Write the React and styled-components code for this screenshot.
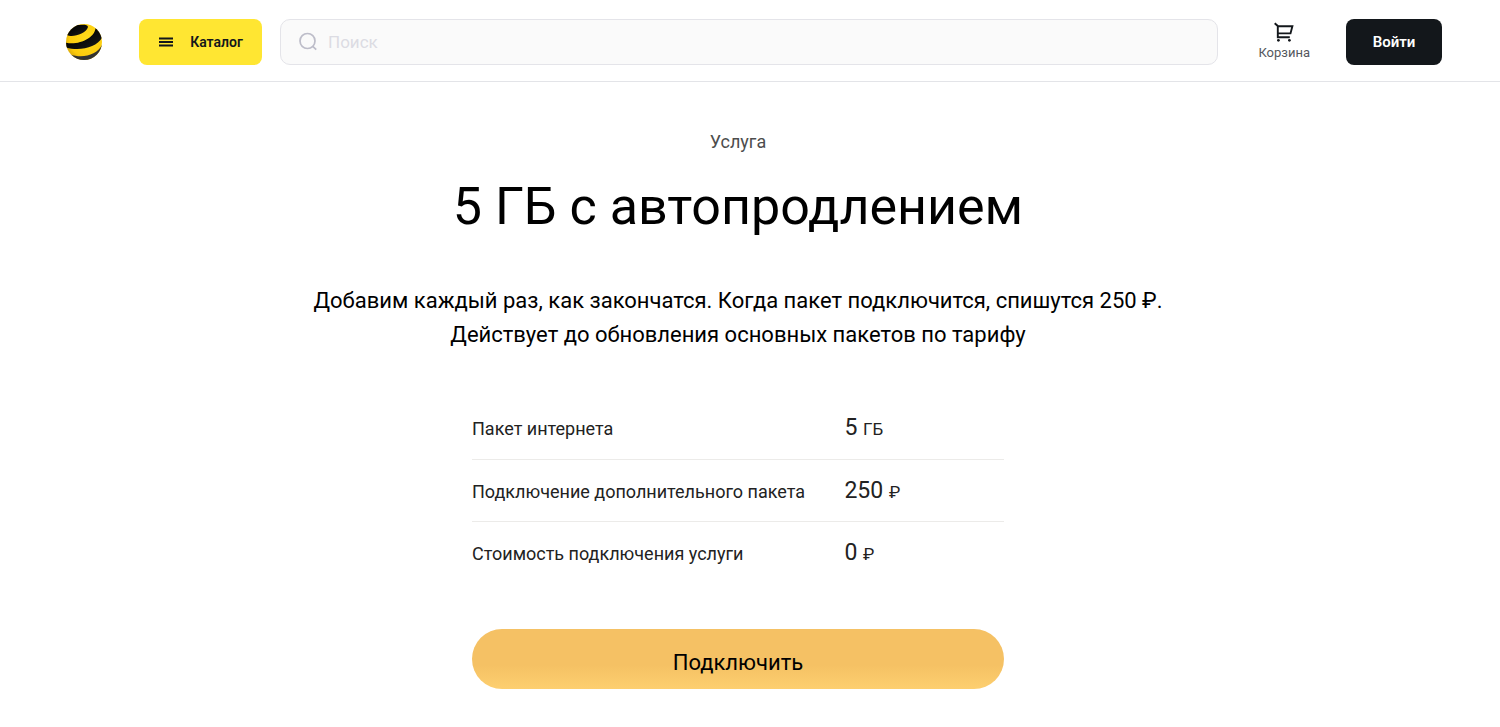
import styled, { createGlobalStyle } from "styled-components";

const GlobalStyle = createGlobalStyle`
  * {
    box-sizing: border-box;
  }

  body {
    margin: 0;
    background: #fff;
    color: #000;
    font-family: Roboto, "Liberation Sans", sans-serif;
  }

  button, input {
    font-family: inherit;
  }
`;

const Header = styled.header`
  display: flex;
  align-items: center;
  height: 82px;
  padding: 2px 58px 0 65px;
  border-bottom: 1px solid #e3e4e8;
`;

const LogoLink = styled.a`
  display: flex;
  margin-right: 36px;
`;

const HeaderButton = styled.button`
  display: flex;
  align-items: center;
  justify-content: center;
  gap: 16px;
  flex: none;
  width: ${props => props.$width};
  height: 46px;
  padding: 0;
  border: 0;
  border-radius: 8px;
  background: ${props => (props.$dark ? "#13171b" : "#ffe632")};
  color: ${props => (props.$dark ? "#fff" : "#13171b")};
  font-size: ${props => (props.$dark ? "15px" : "14px")};
  font-weight: 600;
  cursor: pointer;
`;

const Search = styled.label`
  display: flex;
  align-items: center;
  flex: 1;
  gap: 10px;
  height: 46px;
  margin: 0 40px 0 18px;
  padding: 0 18px;
  border: 1px solid #e4e4e9;
  border-radius: 10px;
  background: #fafafa;
`;

const SearchInput = styled.input`
  flex: 1;
  min-width: 0;
  padding: 0;
  border: 0;
  outline: 0;
  background: transparent;
  font-size: 17px;

  &::placeholder {
    color: #dcdce3;
    opacity: 1;
  }
`;

const CartLink = styled.a`
  display: flex;
  flex-direction: column;
  align-items: center;
  gap: 3px;
  margin-right: 36px;
  color: #55585e;
  font-size: 13px;
  line-height: 16px;
  text-decoration: none;
`;

const Main = styled.main`
  display: flex;
  flex-direction: column;
  align-items: center;
  padding: 48px 36px 38px 12px;
  text-align: center;
`;

const Kind = styled.p`
  margin: 0;
  color: #4d4d4d;
  font-size: 18px;
  line-height: 24px;
`;

const Title = styled.h1`
  margin: 21px 0 0;
  font-size: 52px;
  font-weight: 400;
  line-height: 64px;
`;

const Description = styled.p`
  max-width: 860px;
  margin: 45px 0 0;
  font-size: 22px;
  line-height: 34px;
`;

const Params = styled.table`
  width: 100%;
  max-width: 532px;
  margin-top: 45px;
  border-collapse: collapse;
  table-layout: fixed;
  color: #222;
  text-align: left;
`;

const ParamRow = styled.tr`
  height: 62px;

  & + & {
    border-top: 1px solid #ecebe9;
  }
`;

const ParamName = styled.th`
  width: 70%;
  padding: 2px 0 0;
  font-size: 18px;
  font-weight: 400;
`;

const ParamValue = styled.td`
  padding: 0;
  font-size: 23px;
`;

const Unit = styled.span`
  font-size: 17px;
`;

const ConnectButton = styled.button`
  width: 100%;
  max-width: 532px;
  height: 60px;
  margin-top: 46px;
  padding: 6px 0 0;
  border: 0;
  border-radius: 30px;
  background: linear-gradient(#f5c164 60%, #fdcf70);
  color: #000;
  font-size: 22px;
  cursor: pointer;
`;

const params = [
  { name: "Пакет интернета", value: "5", unit: "ГБ" },
  { name: "Подключение дополнительного пакета", value: "250", unit: "₽" },
  { name: "Стоимость подключения услуги", value: "0", unit: "₽" },
];

const Logo = () => (
  <svg width="38" height="38" viewBox="0 0 38 38" aria-hidden="true">
    <defs>
      <clipPath id="ball">
        <circle cx="19" cy="19" r="18" />
      </clipPath>
      <radialGradient id="yellow" cx="0.6" cy="0.4" r="0.7">
        <stop offset="0" stopColor="#ffdc1c" />
        <stop offset="0.7" stopColor="#fccb0c" />
        <stop offset="1" stopColor="#c99a08" />
      </radialGradient>
      <linearGradient id="black" x1="0" y1="0" x2="1" y2="1">
        <stop offset="0" stopColor="#303030" />
        <stop offset="0.4" stopColor="#050505" />
        <stop offset="1" stopColor="#1c1c1c" />
      </linearGradient>
    </defs>
    <g clipPath="url(#ball)">
      <rect width="38" height="38" fill="url(#yellow)" />
      <path d="M2 12C7 15 21 11 23 4C23 1.5 18 1.5 14 2L8 0L0 8Z" fill="url(#black)" />
      <path d="M0 19.5C13 23 30 15 30.5 5L38 10V13C34 23 17 29 1 24.5Z" fill="url(#black)" />
      <path d="M5 31.5C18 36 33 32 37.5 21V38H5Z" fill="#333" />
    </g>
  </svg>
);

const MenuIcon = () => (
  <svg width="16" height="16" viewBox="0 0 16 16" fill="none" stroke="currentColor" strokeWidth="1.9" aria-hidden="true">
    <path d="M1 4.5H15M1 8H15M1 11.5H15" />
  </svg>
);

const SearchIcon = () => (
  <svg width="19" height="19" viewBox="0 0 19 19" fill="none" stroke="#bdbdc9" strokeWidth="1.7" aria-hidden="true">
    <circle cx="8.5" cy="9" r="7.5" />
    <path d="M13.8 14.3L17.2 17.7" />
  </svg>
);

const CartIcon = () => (
  <svg width="20" height="20" viewBox="0 0 20 20" fill="none" stroke="#13171b" strokeWidth="1.9" aria-hidden="true">
    <path d="M0.7 1.2L3.8 4V15.2H15.8M3.8 4.2H18.4L16.5 11.4H3.8" />
    <circle cx="4.4" cy="18.3" r="1.4" fill="#13171b" stroke="none" />
    <circle cx="15.4" cy="18.3" r="1.4" fill="#13171b" stroke="none" />
  </svg>
);

const App = () => {
  return (
    <>
      <GlobalStyle />
      <Header>
        <LogoLink href="#" aria-label="На главную">
          <Logo />
        </LogoLink>
        <HeaderButton type="button" $width="123px">
          <MenuIcon />
          Каталог
        </HeaderButton>
        <Search>
          <SearchIcon />
          <SearchInput type="search" placeholder="Поиск" aria-label="Поиск" />
        </Search>
        <CartLink href="#">
          <CartIcon />
          Корзина
        </CartLink>
        <HeaderButton type="button" $width="96px" $dark>
          Войти
        </HeaderButton>
      </Header>
      <Main>
        <Kind>Услуга</Kind>
        <Title>5 ГБ с автопродлением</Title>
        <Description>
          Добавим каждый раз, как закончатся. Когда пакет подключится, спишутся 250 ₽.
          Действует до обновления основных пакетов по тарифу
        </Description>
        <Params>
          <tbody>
            {params.map(({ name, value, unit }) => (
              <ParamRow key={name}>
                <ParamName scope="row">{name}</ParamName>
                <ParamValue>
                  {value} <Unit>{unit}</Unit>
                </ParamValue>
              </ParamRow>
            ))}
          </tbody>
        </Params>
        <ConnectButton type="button">Подключить</ConnectButton>
      </Main>
    </>
  );
};

export default App;
